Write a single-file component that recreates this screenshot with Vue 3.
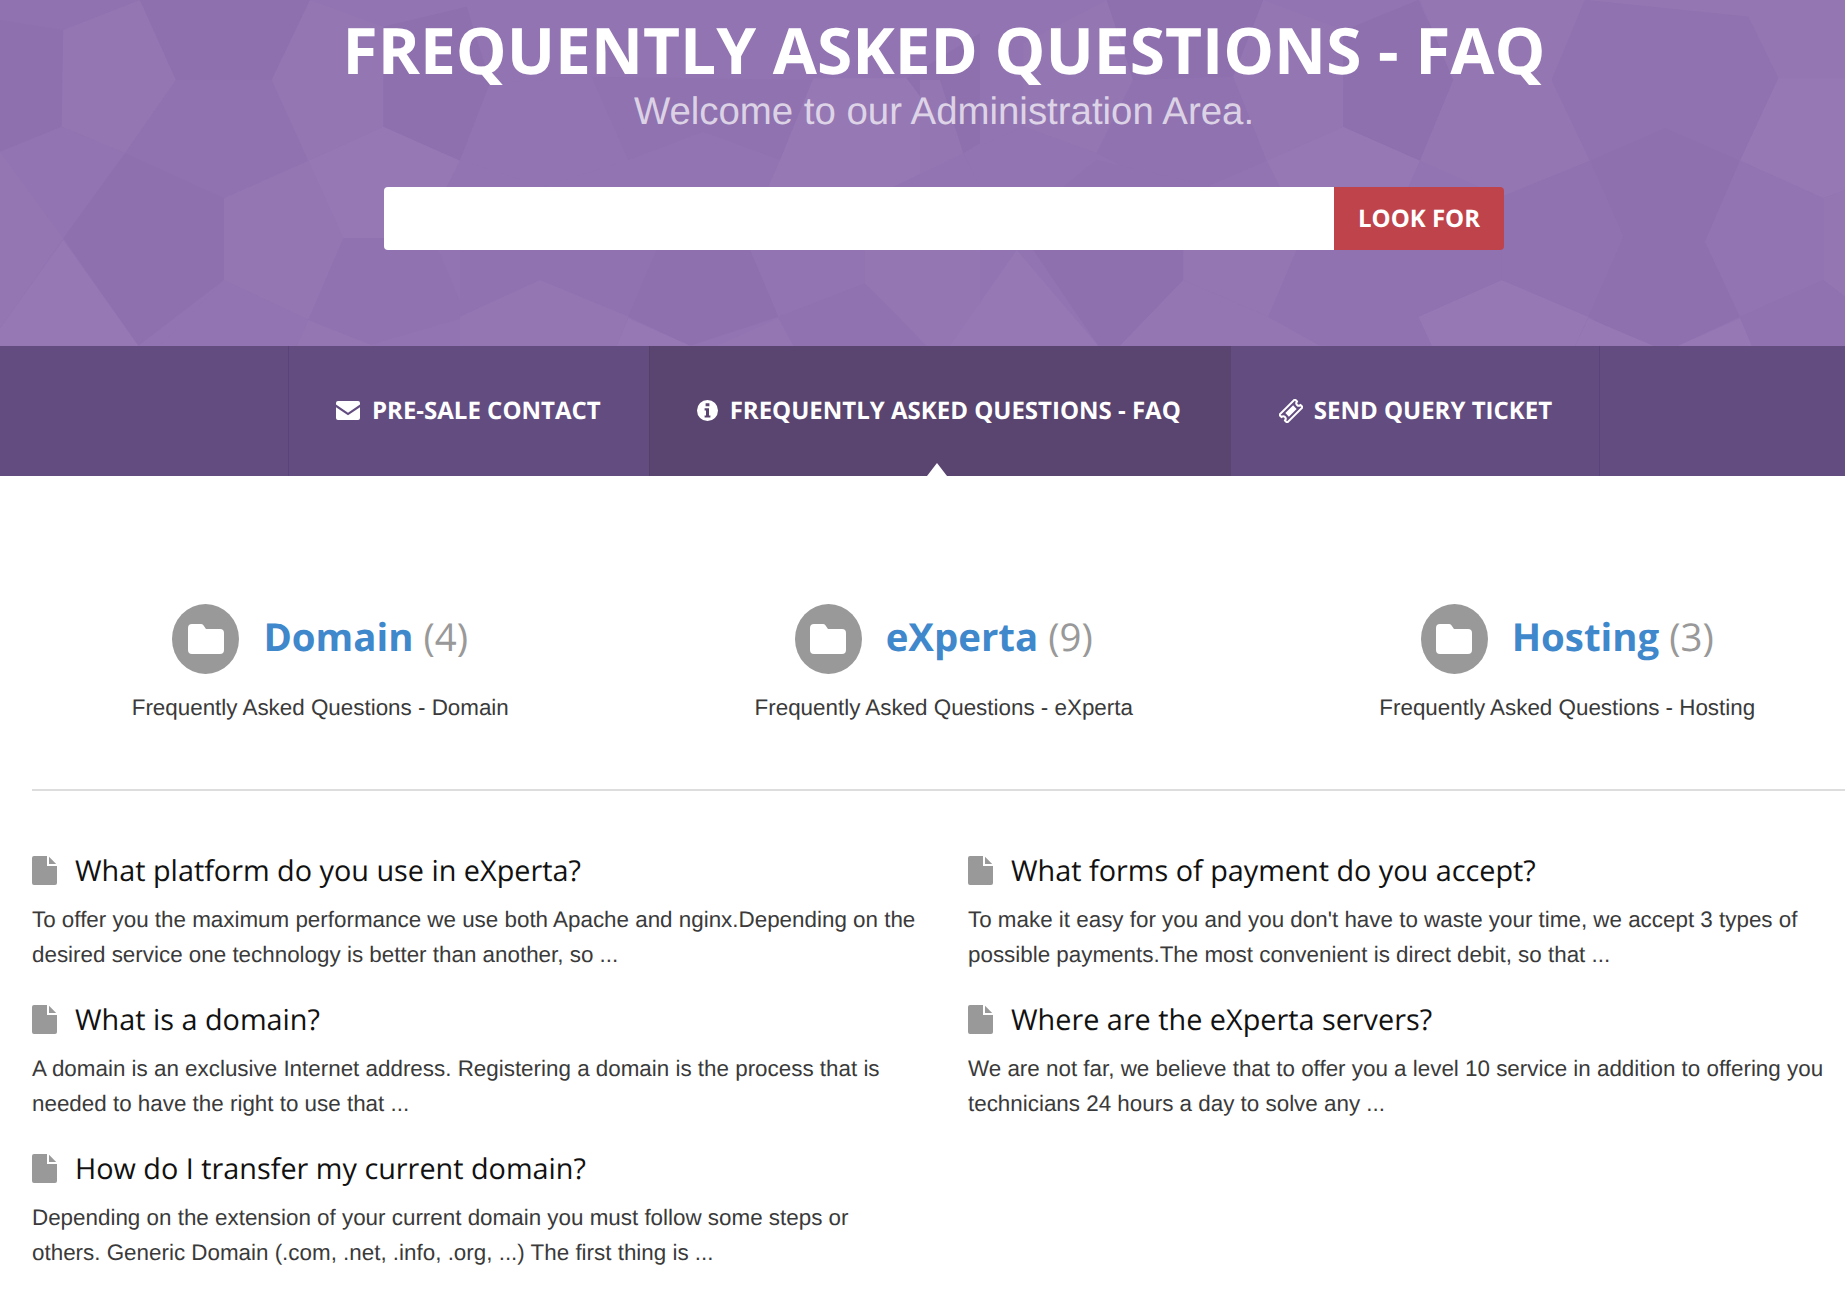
<template>
  <div class="page">
    <header class="hero">
      <svg class="hero-bg" width="1845" height="346" viewBox="0 0 1845 346">
        <polygon v-for="(p, i) in shapes" :key="i" :points="p.points" :fill="p.fill" />
      </svg>
      <div class="hero-inner">
        <h1>FREQUENTLY ASKED QUESTIONS - FAQ</h1>
        <p class="welcome">Welcome to our Administration Area.</p>
        <form class="search" @submit.prevent>
          <input type="text" aria-label="Search" />
          <button type="submit">LOOK FOR</button>
        </form>
      </div>
    </header>

    <nav class="tabs">
      <a class="tab">
        <svg class="ico" width="24" height="19" viewBox="0 0 24 19">
          <path fill="#fff" d="M2 0h20a2 2 0 0 1 2 2v1.6l-12 8.2L0 3.6V2a2 2 0 0 1 2-2z" />
          <path fill="#fff" d="M0 6.2l12 8 12-8V17a2 2 0 0 1-2 2H2a2 2 0 0 1-2-2z" />
        </svg>
        PRE-SALE CONTACT
      </a>
      <a class="tab active">
        <svg class="ico" width="21" height="21" viewBox="0 0 21 21">
          <path fill="#fff" fill-rule="evenodd" d="M10.5 0a10.5 10.5 0 1 1 0 21a10.5 10.5 0 0 1 0-21zM8.6 3.2v3h3.8v-3zM7.6 8.2v2.2h1.4v5H7.6v2.2h5.8v-2.2H12V8.2z" />
        </svg>
        FREQUENTLY ASKED QUESTIONS - FAQ
      </a>
      <a class="tab">
        <svg class="ico" width="24" height="24" viewBox="0 0 24 24">
          <g transform="rotate(-45 12 12)">
            <path fill="none" stroke="#fff" stroke-width="2" stroke-linejoin="round" d="M1 6.5H23V9.6a2.4 2.4 0 0 0 0 4.8v3.1H1V14.4a2.4 2.4 0 0 0 0-4.8z" />
            <rect x="6.5" y="9.5" width="11" height="5" fill="#fff" />
          </g>
        </svg>
        SEND QUERY TICKET
      </a>
    </nav>

    <main class="content">
      <section class="cats">
        <div v-for="c in categories" :key="c.name" class="cat">
          <div class="cat-head">
            <span class="cat-ico">
              <svg width="36" height="30" viewBox="0 0 36 30">
                <path fill="#fff" d="M4 0h9a3 3 0 0 1 2.4 1.2L18 5h14a4 4 0 0 1 4 4v17a4 4 0 0 1-4 4H4a4 4 0 0 1-4-4V4a4 4 0 0 1 4-4z" />
              </svg>
            </span>
            <h2><a>{{ c.name }}</a> <span>({{ c.count }})</span></h2>
          </div>
          <p>Frequently Asked Questions - {{ c.name }}</p>
        </div>
      </section>

      <hr />

      <section class="faq">
        <div v-for="(col, n) in columns" :key="n" class="faq-col">
          <article v-for="q in col" :key="q.title" class="question">
            <h3>
              <svg width="25" height="29" viewBox="0 0 25 29">
                <path fill="#999" d="M2 0h13v10h10v17a2 2 0 0 1-2 2H2a2 2 0 0 1-2-2V2a2 2 0 0 1 2-2z" />
                <path fill="#999" d="M17 .8L24.2 8H17z" />
              </svg>
              <span>{{ q.title }}</span>
            </h3>
            <p>{{ q.text }}</p>
          </article>
        </div>
      </section>
    </main>
  </div>
</template>

<script setup>
const D = '#8e70ae'
const N = '#9072b0'
const M = '#9274b2'
const L = '#9476b3'
const H = '#9678b5'

// banner facets, traced per crop: x and y are in 3x crop pixels
const facets = [
  {
    offset: 0,
    list: [
      [N, [[0, 0], [420, 0], [190, 90], [0, 60]]],
      [D, [[0, 60], [190, 90], [185, 380], [0, 455]]],
      [L, [[190, 90], [420, 0], [528, 240], [375, 460], [185, 380]]],
      [D, [[420, 0], [930, 0], [815, 240], [528, 240]]],
      [N, [[528, 240], [815, 240], [925, 482], [672, 595], [375, 460]]],
      [L, [[930, 0], [1150, 80], [1150, 380], [925, 482], [815, 240]]],
      [D, [[1150, 80], [1400, 20], [1475, 260], [1380, 482], [1150, 380]]],
      [M, [[0, 455], [185, 380], [375, 460], [190, 715]]],
      [D, [[375, 460], [672, 595], [672, 840], [415, 1037], [190, 715]]],
      [H, [[190, 720], [415, 1037], [0, 1037], [0, 985]]],
      [L, [[0, 455], [190, 715], [0, 985]]],
      [L, [[672, 595], [925, 482], [1030, 715], [925, 960], [672, 840]]],
      [H, [[925, 482], [1150, 380], [1380, 482], [1340, 560], [1152, 715], [1030, 715]]],
      [N, [[1030, 715], [1300, 715], [1400, 950], [1100, 1037], [925, 960]]],
      [M, [[672, 840], [925, 960], [890, 1037], [480, 1037]]],
      [L, [[925, 960], [1120, 1037], [890, 1037]]]
    ]
  },
  {
    offset: 460,
    list: [
      [D, [[0, 130], [90, 260], [0, 480]]],
      [M, [[90, 250], [395, 230], [505, 480], [250, 560], [0, 480]]],
      [N, [[395, 230], [505, 480], [730, 395], [960, 480], [1060, 240]]],
      [H, [[1060, 235], [1340, 235], [1510, 460], [1300, 560], [925, 560], [960, 480]]],
      [D, [[1340, 235], [1560, 100], [1560, 430], [1510, 460]]],
      [N, [[0, 750], [590, 750], [510, 950], [240, 840], [0, 950]]],
      [D, [[590, 750], [870, 750], [955, 950], [690, 1037], [505, 950]]],
      [L, [[240, 840], [505, 950], [470, 1037], [0, 1037], [0, 950]]],
      [H, [[505, 955], [690, 1037], [470, 1037]]],
      [L, [[955, 955], [1000, 1037], [770, 1037]]],
      [N, [[955, 950], [1215, 850], [1400, 1037], [1000, 1037]]],
      [L, [[1215, 750], [1560, 750], [1560, 1037], [1400, 1037], [1215, 850]]]
    ]
  },
  {
    offset: 920,
    list: [
      [L, [[0, 240], [60, 240], [130, 460], [0, 520]]],
      [L, [[310, 130], [560, 0], [640, 240], [530, 460], [310, 380]]],
      [D, [[560, 0], [1030, 0], [940, 230], [640, 240]]],
      [N, [[640, 240], [940, 230], [1040, 482], [790, 590], [530, 460]]],
      [L, [[1030, 0], [1270, 90], [1270, 380], [1040, 482], [940, 230]]],
      [D, [[1270, 90], [1560, 60], [1560, 240], [1500, 482], [1270, 380]]],
      [H, [[1040, 482], [1270, 380], [1500, 482], [1465, 560], [1080, 560]]],
      [M, [[130, 460], [310, 380], [530, 460], [430, 560], [180, 560]]],
      [N, [[430, 560], [530, 480], [880, 560]]],
      [H, [[290, 750], [535, 1037], [90, 1037]]],
      [D, [[340, 750], [790, 750], [790, 840], [600, 1037], [535, 1037]]],
      [L, [[790, 750], [1130, 750], [1045, 950], [790, 840]]],
      [L, [[790, 840], [1045, 950], [1200, 1037], [600, 1037]]],
      [N, [[1130, 750], [1500, 750], [1560, 950], [1200, 1037], [1045, 950]]]
    ]
  },
  {
    offset: 1325,
    list: [
      [D, [[60, 90], [280, 0], [385, 240], [285, 480], [55, 380]]],
      [L, [[285, 0], [780, 0], [680, 240], [795, 482], [530, 590], [285, 482], [385, 240]]],
      [L, [[780, 0], [1560, 0], [1560, 235], [1360, 235], [1270, 50]]],
      [N, [[780, 0], [1270, 50], [1360, 235], [1245, 482], [1020, 385], [795, 482], [680, 240]]],
      [H, [[1360, 235], [1560, 235], [1560, 570], [1495, 595], [1245, 482]]],
      [D, [[795, 482], [1020, 385], [1245, 482], [1140, 725], [1245, 950], [1060, 1037], [950, 1037], [790, 950], [895, 710]]],
      [M, [[1245, 482], [1495, 595], [1495, 840], [1245, 950], [1140, 725]]],
      [L, [[1495, 595], [1560, 570], [1560, 890], [1495, 840]]],
      [N, [[1245, 950], [1495, 840], [1560, 890], [1560, 1037], [1280, 1037]]],
      [H, [[1245, 955], [1280, 1037], [1060, 1037]]],
      [H, [[790, 955], [985, 1037], [750, 1037]]],
      [H, [[530, 840], [790, 950], [750, 1037], [320, 1037], [280, 950]]],
      [N, [[530, 590], [795, 482], [895, 710], [790, 950], [530, 840]]],
      [N, [[190, 750], [530, 750], [530, 840], [280, 950]]],
      [N, [[0, 750], [190, 750], [280, 950], [320, 1037], [0, 1037]]]
    ]
  }
]

const shapes = facets.flatMap(({ offset, list }) =>
  list.map(([fill, pts]) => ({
    fill,
    points: pts.map(([x, y]) => `${(offset + x / 3).toFixed(1)},${(y / 3).toFixed(1)}`).join(' ')
  }))
)

const categories = [
  { name: 'Domain', count: 4 },
  { name: 'eXperta', count: 9 },
  { name: 'Hosting', count: 3 }
]

const columns = [
  [
    {
      title: 'What platform do you use in eXperta?',
      text: 'To offer you the maximum performance we use both Apache and nginx.Depending on the\ndesired service one technology is better than another, so ...'
    },
    {
      title: 'What is a domain?',
      text: 'A domain is an exclusive Internet address. Registering a domain is the process that is\nneeded to have the right to use that ...'
    },
    {
      title: 'How do I transfer my current domain?',
      text: 'Depending on the extension of your current domain you must follow some steps or\nothers. Generic Domain (.com, .net, .info, .org, ...) The first thing is ...'
    }
  ],
  [
    {
      title: 'What forms of payment do you accept?',
      text: "To make it easy for you and you don't have to waste your time, we accept 3 types of\npossible payments.The most convenient is direct debit, so that ..."
    },
    {
      title: 'Where are the eXperta servers?',
      text: 'We are not far, we believe that to offer you a level 10 service in addition to offering you\ntechnicians 24 hours a day to solve any ...'
    }
  ]
]
</script>

<style>
html, body {
  margin: 0;
  overflow-x: hidden;
  background: #fff;
}
</style>

<style scoped>
.page {
  min-height: 1304px;
  overflow: hidden;
  font-family: "Liberation Sans", Arial, sans-serif;
  color: #3a3a3a;
  text-rendering: geometricPrecision;
}

.hero {
  position: relative;
  height: 346px;
  background: #9274b2;
  overflow: hidden;
}

.hero-bg {
  position: absolute;
  top: 0;
  left: 0;
}

.hero-inner {
  position: relative;
  display: flex;
  flex-direction: column;
  align-items: center;
  padding-top: 15px;
  margin-left: 43px;
}

h1 {
  margin: 0;
  font-family: "Open Sans", sans-serif;
  font-size: 64px;
  line-height: 70px;
  font-weight: 700;
  color: #fff;
}

.welcome {
  margin: 5px 0 0;
  font-size: 38.4px;
  line-height: 44px;
  color: rgba(255, 255, 255, 0.7);
}

.search {
  display: flex;
  width: 1120px;
  height: 63px;
  margin-top: 53px;
}

.search input {
  flex: 1;
  border: 0;
  padding: 0 16px;
  background: #fff;
  border-radius: 4px 0 0 4px;
}

.search button {
  width: 170px;
  padding: 0;
  border: 0;
  border-radius: 0 4px 4px 0;
  background: #bf434b;
  color: #fff;
  font-family: "Open Sans", sans-serif;
  font-size: 24px;
  font-weight: 700;
  text-rendering: geometricPrecision;
}

.tabs {
  display: flex;
  height: 130px;
  padding-left: 288px;
  background: #634c80;
}

.tab {
  position: relative;
  display: flex;
  align-items: center;
  gap: 12px;
  padding: 0 50px 1px 47px;
  border-left: 1px solid #59437a;
  font-family: "Open Sans", sans-serif;
  font-size: 24px;
  font-weight: 700;
  color: #fff;
  white-space: nowrap;
}

.tab:first-child {
  padding-right: 48px;
}

.tab:last-child {
  gap: 11px;
  padding-right: 47px;
  border-right: 1px solid #59437a;
}

.tab.active {
  background: #5a4470;
  border-left-color: #544068;
}

.tab.active + .tab {
  border-left-color: transparent;
}

.tab.active::after {
  content: "";
  position: absolute;
  left: 50%;
  bottom: 0;
  margin-left: -13px;
  border: 10px solid transparent;
  border-top: 0;
  border-bottom: 13px solid #fff;
}

.ico {
  flex: none;
}

.content {
  padding: 128px 0 0 32px;
}

.cats {
  display: grid;
  grid-template-columns: repeat(3, 623.5px);
  margin-left: -23.5px;
}

.cat {
  display: flex;
  flex-direction: column;
  align-items: center;
}

.cat-head {
  display: flex;
  align-items: center;
  gap: 24px;
}

.cat-ico {
  display: flex;
  align-items: center;
  justify-content: center;
  width: 67px;
  height: 70px;
  border-radius: 50%;
  background: #999;
}

h2 {
  margin: 0;
  padding-bottom: 5px;
  font-family: "Open Sans", sans-serif;
  font-size: 38.4px;
  font-weight: 700;
  line-height: 50px;
}

h2 a {
  color: #3f88cc;
}

h2 span {
  font-weight: 400;
  color: #999;
}

.cat p {
  margin: 16px 0 0;
  font-size: 22.4px;
  line-height: 35px;
}

hr {
  width: 1900px;
  height: 2px;
  margin: 64px 0 0;
  border: 0;
  background: #ddd;
}

.faq {
  display: grid;
  grid-template-columns: 890px 890px;
  gap: 46px;
  padding-top: 59px;
}

.question {
  margin-bottom: 27px;
}

h3 {
  display: flex;
  align-items: center;
  gap: 18px;
  margin: 0 0 11px;
  font-family: "Open Sans", sans-serif;
  font-size: 28.8px;
  font-weight: 400;
  line-height: 40px;
  color: #111;
}

h3 svg {
  margin-bottom: 1px;
}

h3 span {
  padding-top: 1px;
}

.question p {
  margin: 0;
  font-size: 22.4px;
  line-height: 35px;
  white-space: pre-line;
}
</style>
